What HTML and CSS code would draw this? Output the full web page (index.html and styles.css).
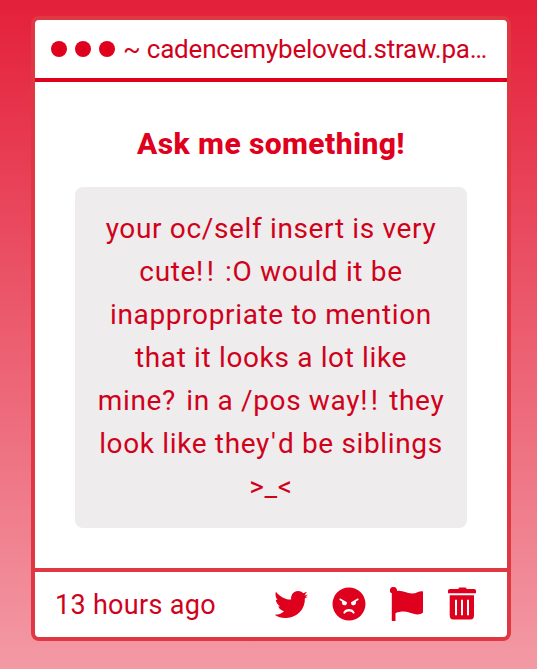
FILE: index.html
```html
<!DOCTYPE html>
<html lang="en">
<head>
    <meta charset="UTF-8">
    <meta name="viewport" content="width=device-width, initial-scale=1.0">
    <title>Ask me something!</title>
    <link rel="stylesheet" href="styles.css">
</head>
<body>
<div class="card">
    <div class="header">
        <span class="dot"></span>
        <span class="dot"></span>
        <span class="dot"></span>
        <span class="url">~ cadencemybeloved.straw.pa…</span>
    </div>
    <div class="content">
        <h1>Ask me something!</h1>
        <p class="message">your oc/self insert is very cute<span class="mark">!!</span> :O would it be inappropriate to mention that it looks a lot like mine<span class="mark">?</span> in a /pos way<span class="mark">!!</span> they look like they<span class="quote">'</span>d be siblings &gt;_&lt;</p>
    </div>
    <div class="footer">
        <span class="time">13 hours ago</span>
        <div class="icons">
            <svg width="34" height="34" viewBox="0 0 24 24"><path d="M23.950 5.300L21.500 6L23.300 3.300L20.600 4.400C18.500 2 13.500 2.300 12.200 6.500C12 7.300 12 8 12.100 8.800C8.500 9.300 4.500 6.800 1.300 3.300C0.700 5.600 1.300 7.500 2.500 9.200L1.200 9C1.600 11 2.600 12.600 4.200 13.600L3 13.800C3.800 15.600 5.200 16.700 7.100 17.100C5.300 18.800 3.300 19.600 0.500 19.600C3 21.400 5.500 21.900 8.500 21.800C16.500 21.600 22.100 15.500 21.800 7.900L23.950 6.800L22.200 6.900z"/></svg>
            <svg width="34" height="34" viewBox="0 0 34 34"><path fill-rule="evenodd" d="M17 0.500a16.500 16.500 0 1 1 0 33a16.500 16.500 0 0 1 0-33zM8 11.300L15 15.200C15 17.600 14 18.300 12.500 18.300C10.600 18.300 9.600 17 10 14.600L7.300 12.700zM26 11.300L19 15.200C19 17.600 20 18.300 21.500 18.300C23.400 18.300 24.400 17 24 14.600L26.700 12.700zM11.400 25.500C12.800 20.900 21.200 20.900 22.600 25.500C22.800 26.800 21.300 27.100 20.600 26C19 24 15 24 13.400 26C12.700 27.100 11.200 26.800 11.400 25.500z"/></svg>
            <svg width="34" height="34" viewBox="0 0 34 34"><path d="M3.500 0A3.300 3.300 0 0 1 6.900 4.100C12 2.800 16 6.500 22 6.600C27 6.700 29.500 3.500 33 4.600V25.500C29 29 24 27 20 25.800C15.500 24.300 11 24 5.500 26.200V34H1.800V6.300A3.300 3.300 0 0 1 3.500 0z"/></svg>
            <svg width="34" height="34" viewBox="1 0 34 34"><path d="M11.500 2V1.500Q11.500 0.500 13 0.500H18Q19.500 0.500 19.500 1.500V2H27Q29 2 29 3.500V6.300H1V3.500Q1 2 3 2z"/><path fill-rule="evenodd" d="M2.700 8.300H27V28Q27 32.500 23.500 32.500H6.200Q2.700 32.500 2.700 28zM8 12.800V28.300H10V12.800zM14 12.800V28.300H16V12.800zM20 12.800V28.300H22V12.800z"/></svg>
        </div>
    </div>
</div>
</body>
</html>
```

FILE: styles.css
```css
* {
    box-sizing: border-box;
}
body {
    margin: 0;
    height: 669px;
    padding: 16px 26px 0 31px;
    overflow: hidden;
    background: linear-gradient(#e4203a, #f39aa5);
    font-family: Roboto, sans-serif;
    color: #d0021b;
}
.card {
    display: flex;
    flex-direction: column;
    height: 625px;
    border: 4px solid #e03843;
    border-radius: 8px;
    background-color: #fff;
}
.header {
    display: flex;
    align-items: center;
    height: 62px;
    padding: 0 16px;
    border-bottom: 4px solid #df001e;
}
.dot {
    flex-shrink: 0;
    width: 16px;
    height: 16px;
    margin-right: 8px;
    border-radius: 50%;
    background-color: #df001e;
}
.url {
    font-size: 26px;
    letter-spacing: -0.2px;
    white-space: nowrap;
}
.content {
    flex: 1;
    padding: 40px;
    text-align: center;
}
h1 {
    margin: 0 0 22px;
    font-size: 30px;
    font-weight: 800;
    line-height: 43px;
    letter-spacing: 0.4px;
    color: #df001e;
}
.message {
    height: 341px;
    margin: 0;
    padding: 20px 16px;
    border-radius: 8px;
    background-color: #eeecec;
    font-size: 28px;
    line-height: 43px;
    letter-spacing: 0.65px;
}
.mark {
    letter-spacing: 3.5px;
}
.quote {
    margin-left: 1px;
    letter-spacing: 2px;
}
.footer {
    display: flex;
    align-items: center;
    justify-content: space-between;
    height: 69px;
    padding: 0 25px 0 20px;
    border-top: 4px solid #e03843;
}
.time {
    font-size: 27px;
    letter-spacing: 0.3px;
}
.icons {
    display: flex;
    gap: 24px;
    padding-bottom: 2px;
}
.icons svg {
    display: block;
    fill: #df001e;
}
```
